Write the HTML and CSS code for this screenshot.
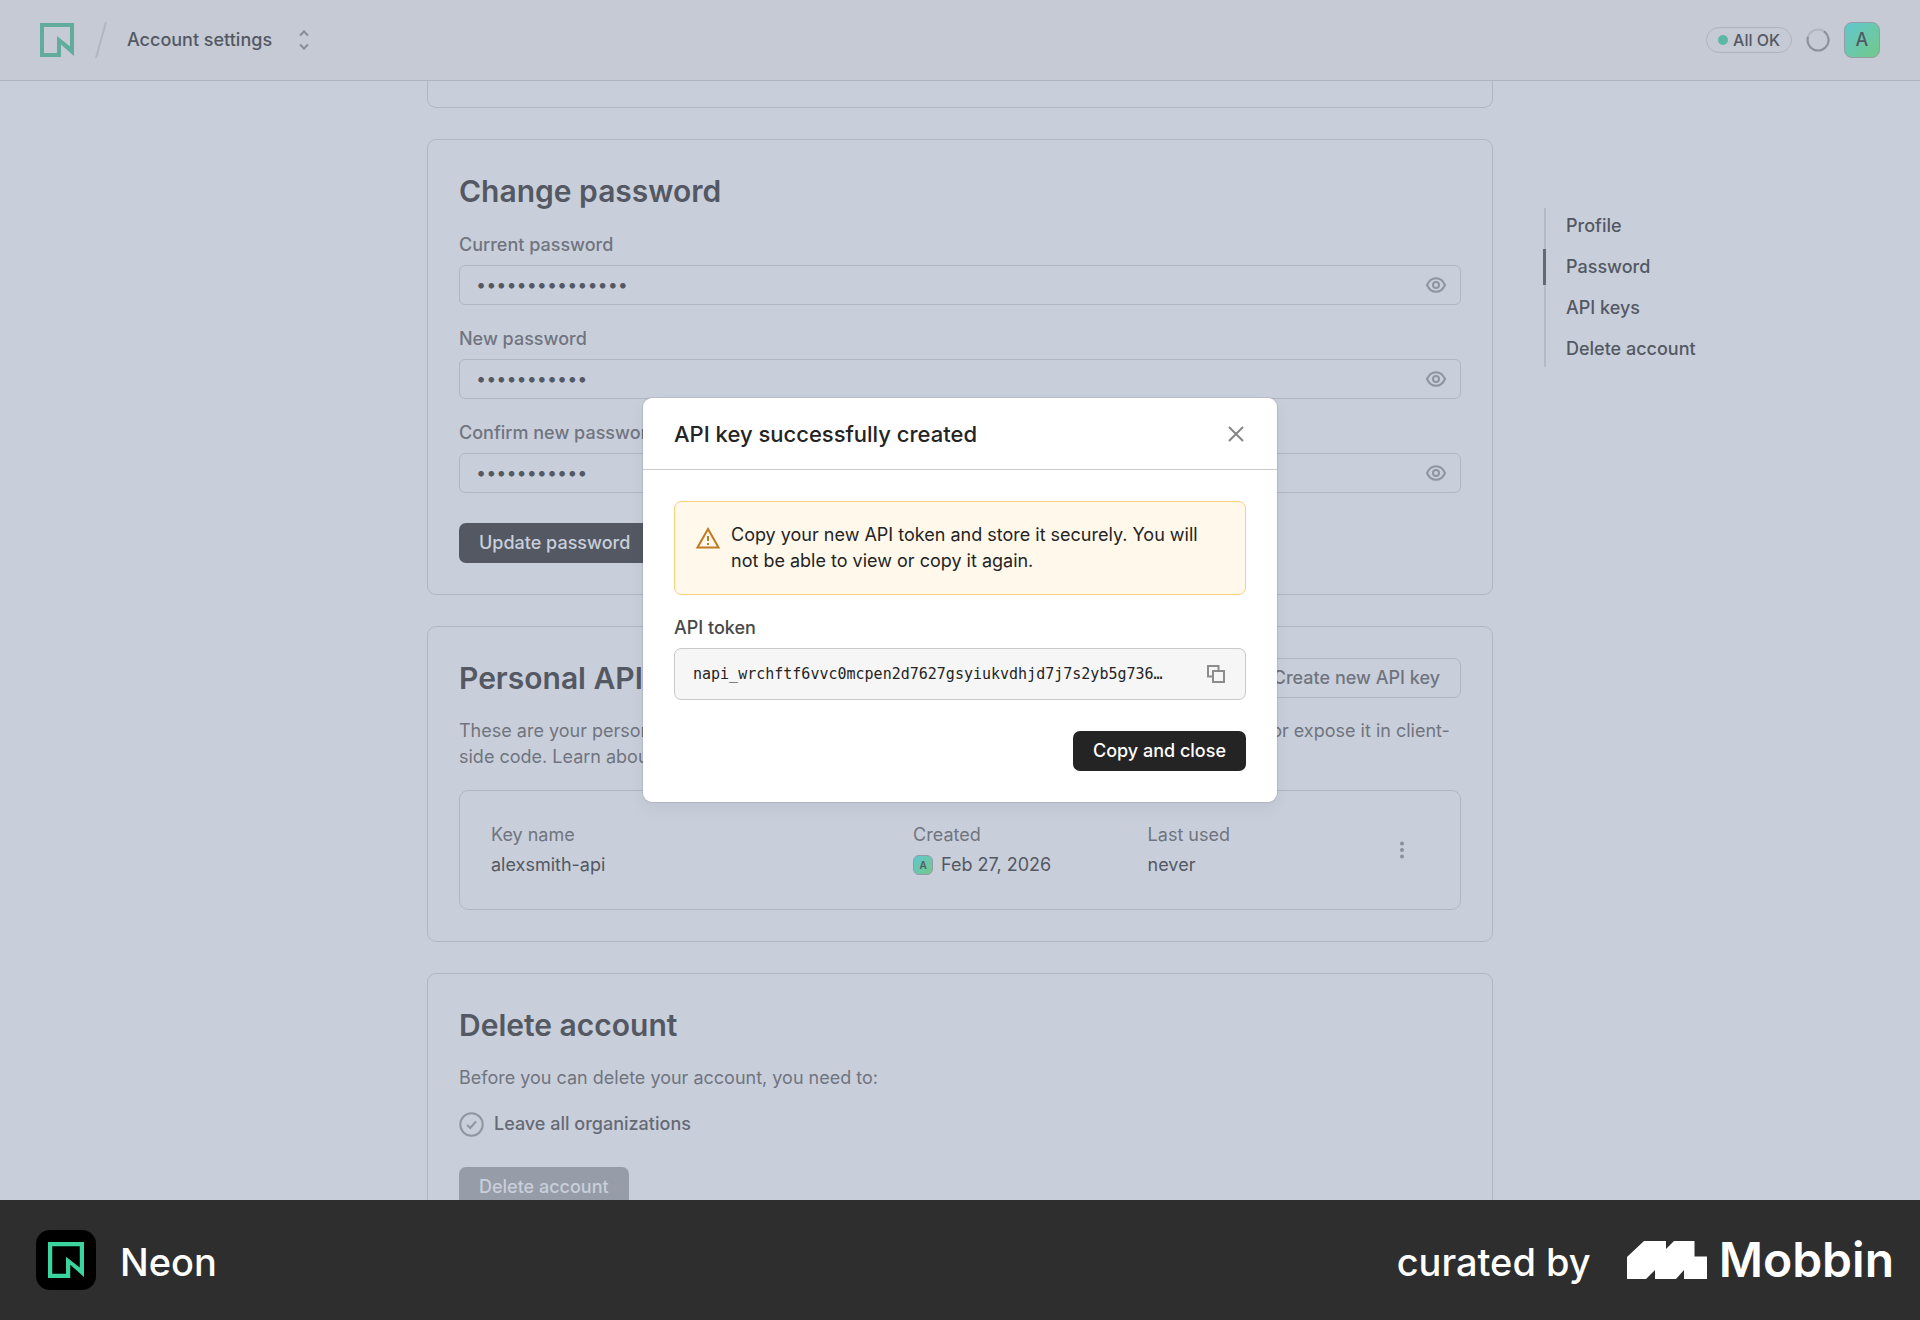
FILE: index.html
```html
<!DOCTYPE html>
<html lang="en">
<head>
    <meta charset="UTF-8">
    <meta name="viewport" content="width=device-width, initial-scale=1.0">
    <title>Account settings - Neon</title>
    <link rel="stylesheet" href="styles.css">
</head>
<body>
    <div class="app">
        <header class="topbar">
            <a class="logo" href="#" aria-label="Neon">
                <svg width="34" height="34" viewBox="0 0 34 34" fill="#62ac9c" fill-rule="evenodd"><path d="M0 0H34V33L21 21.5V34H0ZM4 4V30H17V13L30 23.5V4Z"/></svg>
            </a>
            <svg class="slash" width="12" height="38" viewBox="0 0 12 38" fill="none" stroke="#b1b6c2" stroke-width="2"><path d="M1 37L11 1"/></svg>
            <button class="switcher" type="button">
                Account settings
                <svg width="12" height="20" viewBox="0 0 12 20" fill="none" stroke="#888d99" stroke-width="2"><path d="M2 5.5L6 1.5L10 5.5M2 14.5L6 18.5L10 14.5"/></svg>
            </button>
            <div class="topbar-right">
                <a class="status" href="#"><span class="dot"></span>All OK</a>
                <svg width="24" height="24" viewBox="0 0 24 24" fill="none" stroke-width="2"><circle cx="12" cy="12" r="10.5" stroke="#b1b6c2"/><path d="M18 3.4A10.5 10.5 0 1 1 2 9" stroke="#8b909c"/></svg>
                <button class="avatar" type="button">A</button>
            </div>
        </header>

        <main class="page">
            <div class="cards">
                <section class="card card-profile"></section>

                <!-- Password -->
                <section class="card">
                    <h2>Change password</h2>
                    <form class="password-form">
                        <div class="field">
                            <label for="current">Current password</label>
                            <div class="control">
                                <input id="current" type="password" value="passwordpasswor">
                                <button type="button" aria-label="Show password">
                                    <svg width="20" height="16" viewBox="0 0 20 16" fill="none" stroke="#8f94a1" stroke-width="2"><path d="M1 8C3 3.5 6 1.2 10 1.2S17 3.5 19 8C17 12.5 14 14.8 10 14.8S3 12.5 1 8Z"/><circle cx="10" cy="8" r="3"/></svg>
                                </button>
                            </div>
                        </div>
                        <div class="field">
                            <label for="new">New password</label>
                            <div class="control">
                                <input id="new" type="password" value="newpassword">
                                <button type="button" aria-label="Show password">
                                    <svg width="20" height="16" viewBox="0 0 20 16" fill="none" stroke="#8f94a1" stroke-width="2"><path d="M1 8C3 3.5 6 1.2 10 1.2S17 3.5 19 8C17 12.5 14 14.8 10 14.8S3 12.5 1 8Z"/><circle cx="10" cy="8" r="3"/></svg>
                                </button>
                            </div>
                        </div>
                        <div class="field">
                            <label for="confirm">Confirm new password</label>
                            <div class="control">
                                <input id="confirm" type="password" value="newpassword">
                                <button type="button" aria-label="Show password">
                                    <svg width="20" height="16" viewBox="0 0 20 16" fill="none" stroke="#8f94a1" stroke-width="2"><path d="M1 8C3 3.5 6 1.2 10 1.2S17 3.5 19 8C17 12.5 14 14.8 10 14.8S3 12.5 1 8Z"/><circle cx="10" cy="8" r="3"/></svg>
                                </button>
                            </div>
                        </div>
                        <button class="btn btn-muted-dark" type="button">Update password</button>
                    </form>
                </section>

                <!-- API keys -->
                <section class="card">
                    <div class="card-head">
                        <h2>Personal API keys</h2>
                        <button class="btn btn-outline" type="button">Create new API key</button>
                    </div>
                    <p class="text">These are your personal API keys. Treat them like a password: do not share the key with others or expose it in client-side code. Learn about API keys.</p>
                    <div class="keys">
                        <table>
                            <tbody>
                                <tr>
                                    <th class="col-name" scope="col">Key name</th>
                                    <th class="col-created" scope="col">Created</th>
                                    <th scope="col">Last used</th>
                                    <td class="col-menu" rowspan="2">
                                        <button type="button" aria-label="Key actions">
                                            <svg width="4" height="18" viewBox="0 0 4 18" fill="#8b909c"><circle cx="2" cy="2.5" r="2"/><circle cx="2" cy="9" r="2"/><circle cx="2" cy="15.5" r="2"/></svg>
                                        </button>
                                    </td>
                                </tr>
                                <tr>
                                    <td>alexsmith-api</td>
                                    <td><span class="created"><span class="avatar-small">A</span>Feb 27, 2026</span></td>
                                    <td>never</td>
                                </tr>
                            </tbody>
                        </table>
                    </div>
                </section>

                <!-- Delete account -->
                <section class="card">
                    <h2>Delete account</h2>
                    <p class="text">Before you can delete your account, you need to:</p>
                    <ul class="steps">
                        <li>
                            <svg width="25" height="25" viewBox="0 0 25 25" fill="none" stroke="#9095a2" stroke-width="2"><circle cx="12.5" cy="12.5" r="11.2"/><path d="M8 13L11.3 16L17 9.5"/></svg>
                            Leave all organizations
                        </li>
                    </ul>
                    <button class="btn btn-disabled" type="button" disabled>Delete account</button>
                </section>
            </div>

            <nav class="toc">
                <a href="#">Profile</a>
                <a class="active" href="#">Password</a>
                <a href="#">API keys</a>
                <a href="#">Delete account</a>
            </nav>
        </main>

        <div class="overlay">
            <div class="modal" role="dialog" aria-labelledby="modal-title">
                <div class="modal-head">
                    <h1 id="modal-title">API key successfully created</h1>
                    <button type="button" aria-label="Close">
                        <svg width="16" height="16" viewBox="0 0 16 16" fill="none" stroke="#858585" stroke-width="2"><path d="M1 1L15 15M15 1L1 15"/></svg>
                    </button>
                </div>
                <div class="modal-body">
                    <div class="alert">
                        <svg width="24" height="22" viewBox="0 0 24 22" fill="none" stroke="#c07a22" stroke-width="2"><path d="M12 2L22.5 20.5H1.5Z"/><path d="M12 9V14M12 16V18"/></svg>
                        <p>Copy your new API token and store it securely. You will not be able to view or copy it again.</p>
                    </div>
                    <label for="token">API token</label>
                    <div class="token">
                        <input id="token" type="text" readonly value="napi_wrchftf6vvc0mcpen2d7627gsyiukvdhjd7j7s2yb5g736…">
                        <button type="button" aria-label="Copy">
                            <svg width="18" height="18" viewBox="0 0 18 18" fill="none" stroke="#8c8c8c" stroke-width="2"><path d="M6 11.5H1V1H11.5V6"/><path d="M6 6H17V17H6Z"/></svg>
                        </button>
                    </div>
                    <button class="btn btn-primary" type="button">Copy and close</button>
                </div>
            </div>
        </div>
    </div>

    <footer class="credit">
        <span class="app-icon">
            <svg width="36" height="36" viewBox="0 0 34 34" fill="#3ad59f" fill-rule="evenodd"><path d="M0 0H34V33L21 21.5V34H0ZM4 4V30H17V14L30 24V4Z"/></svg>
        </span>
        <span class="app-name">Neon</span>
        <span class="curated">curated by</span>
        <svg width="80" height="38" viewBox="0 0 80 38" fill="#fff"><path d="M0 16L17 0H39V8L47 0H67.5V15.5H80V38H57V29L49 38H28V29L19 38H0Z"/></svg>
        <span class="mobbin">Mobbin</span>
    </footer>
</body>
</html>
```
FILE: styles.css
```css
* {
    box-sizing: border-box;
}

body {
    display: flex;
    flex-direction: column;
    height: 100vh;
    margin: 0;
    font-family: Inter, sans-serif;
    font-size: 18px;
    line-height: 26px;
    color: #535863;
}

h1,
h2,
p,
ul {
    margin: 0;
    padding: 0;
}

a {
    color: inherit;
    text-decoration: none;
}

button,
input {
    font: inherit;
    color: inherit;
    background: none;
    border: none;
    padding: 0;
}

button {
    cursor: pointer;
}

svg {
    display: block;
    flex-shrink: 0;
}

.app {
    position: relative;
    display: flex;
    flex-direction: column;
    flex: 1;
    min-height: 0;
    overflow: hidden;
    background-color: #c9cfda;
}

/* Top bar */
.topbar {
    display: flex;
    align-items: center;
    flex-shrink: 0;
    height: 81px;
    padding: 0 40px;
    background-color: #c5cad5;
    border-bottom: 1px solid #aeb3c0;
}

.slash {
    margin: 0 20px 0 21px;
}

.switcher {
    display: flex;
    align-items: center;
    gap: 26px;
    font-weight: 500;
}

.topbar-right {
    display: flex;
    align-items: center;
    gap: 14px;
    margin-left: auto;
}

.status {
    display: flex;
    align-items: center;
    gap: 5px;
    height: 26px;
    padding: 0 11px;
    border: 1px solid #aeb3c0;
    border-radius: 13px;
    font-size: 16px;
    font-weight: 500;
}

.dot {
    width: 10px;
    height: 10px;
    border-radius: 50%;
    background-color: #5bb9a3;
}

.avatar {
    width: 36px;
    height: 36px;
    border: 1px solid #959ba7;
    border-radius: 8px;
    background: linear-gradient(135deg, #60c8cf, #74c888);
    font-weight: 500;
}

/* Page */
.page {
    display: grid;
    grid-template-columns: 1fr minmax(0, 1066px) 1fr;
    column-gap: 51px;
}

.cards {
    grid-column: 2;
    display: flex;
    flex-direction: column;
    gap: 31px;
}

.card {
    padding: 31px;
    border: 1px solid #b1b6c3;
    border-radius: 9px;
}

.card-profile {
    height: 27px;
    padding: 0;
    border-top: none;
    border-radius: 0 0 9px 9px;
}

.card h2 {
    font-size: 30px;
    font-weight: 600;
    line-height: 40px;
}

.card-head {
    display: flex;
    align-items: center;
    justify-content: space-between;
}

.password-form {
    display: flex;
    flex-direction: column;
    align-items: flex-start;
    gap: 22px;
    margin-top: 22px;
}

.field {
    width: 100%;
}

.field label {
    display: block;
    margin-bottom: 8px;
    line-height: 24px;
    font-weight: 500;
    color: #70747f;
}

.control {
    display: flex;
    align-items: center;
    height: 40px;
    padding: 0 14px 0 16px;
    border: 1px solid #b1b6c3;
    border-radius: 6px;
}

.control input {
    flex: 1;
    min-width: 0;
    outline: none;
}

.btn {
    height: 40px;
    padding: 0 20px;
    border-radius: 7px;
    font-weight: 500;
    white-space: nowrap;
}

.btn-muted-dark {
    margin-top: 8px;
    background-color: #535863;
    color: #c9cfda;
}

.btn-outline {
    border: 1px solid #b1b6c3;
    color: #70747f;
}

.btn-disabled {
    background-color: #969ca8;
    color: #c9cfda;
}

.text {
    margin-top: 20px;
    color: #70747f;
}

.keys {
    margin-top: 20px;
    padding: 29px 31px;
    border: 1px solid #b1b6c3;
    border-radius: 9px;
}

.keys table {
    width: 100%;
    border-collapse: collapse;
}

.keys th,
.keys td {
    height: 30px;
    padding: 0;
    text-align: left;
    font-weight: 400;
}

.keys th {
    color: #70747f;
}

.keys .col-name {
    width: 45%;
}

.keys .col-created {
    width: 25%;
}

.keys .col-menu {
    width: 29px;
    vertical-align: middle;
}

.col-menu button {
    display: block;
}

.created {
    display: flex;
    align-items: center;
    gap: 8px;
}

.avatar-small {
    width: 20px;
    height: 20px;
    border: 1px solid #959ba7;
    border-radius: 6px;
    background: linear-gradient(135deg, #60c8cf, #74c888);
    font-size: 10px;
    font-weight: 600;
    line-height: 18px;
    text-align: center;
}

.steps {
    margin: 20px 0 30px;
    list-style: none;
    font-weight: 500;
    color: #656a75;
}

.steps li {
    display: flex;
    align-items: center;
    gap: 10px;
}

/* Side navigation */
.toc {
    display: flex;
    flex-direction: column;
    align-self: start;
    align-items: flex-start;
    gap: 5px;
    margin-top: 127px;
    border-left: 2px solid #b5bac6;
    font-weight: 500;
}

.toc a {
    margin-left: -3px;
    padding: 5px 0 5px 20px;
    border-left: 3px solid transparent;
}

.toc .active {
    border-left-color: #646975;
}

/* Modal */
.overlay {
    position: absolute;
    inset: 0;
    display: flex;
    align-items: center;
    justify-content: center;
}

.modal {
    width: 634px;
    border-radius: 9px;
    background-color: #fff;
    color: #242424;
    box-shadow: 0 0 0 1px rgba(0, 0, 0, 0.08), 0 6px 14px rgba(60, 70, 90, 0.08);
}

.modal-head {
    display: flex;
    align-items: center;
    justify-content: space-between;
    height: 72px;
    padding: 0 33px 0 31px;
    border-bottom: 1px solid #cbcbcb;
}

.modal-head h1 {
    font-size: 22px;
    font-weight: 500;
}

.modal-body {
    display: flex;
    flex-direction: column;
    padding: 31px;
}

.alert {
    display: flex;
    gap: 11px;
    padding: 20px 21px;
    border: 1px solid #f6d27c;
    border-radius: 7px;
    background-color: #fff8eb;
}

.alert svg {
    margin-top: 5px;
}

.modal-body label {
    margin: 21px 0 8px;
    line-height: 24px;
    font-weight: 500;
    color: #484848;
}

.token {
    display: flex;
    align-items: center;
    height: 52px;
    padding: 0 20px 0 18px;
    border: 1px solid #c9c9c9;
    border-radius: 7px;
    background-color: #f6f6f6;
}

.token input {
    flex: 1;
    min-width: 0;
    outline: none;
    font-family: "DejaVu Sans Mono", monospace;
    font-size: 15px;
}

.btn-primary {
    align-self: flex-end;
    margin-top: 31px;
    background-color: #242424;
    color: #fff;
}

/* Credit bar */
.credit {
    display: flex;
    align-items: center;
    flex-shrink: 0;
    height: 120px;
    padding: 0 26px 0 36px;
    background-color: #2e2e2e;
    color: #fff;
    font-size: 38px;
    font-weight: 500;
    line-height: 60px;
}

.app-icon {
    display: flex;
    align-items: center;
    justify-content: center;
    width: 60px;
    height: 60px;
    margin-right: 24px;
    border-radius: 14px;
    background-color: #000;
}

.app-name,
.curated {
    padding-top: 4px;
}

.curated {
    margin-left: auto;
    margin-right: 36px;
}

.mobbin {
    margin-left: 12px;
    font-size: 48px;
    font-weight: 600;
}
```
